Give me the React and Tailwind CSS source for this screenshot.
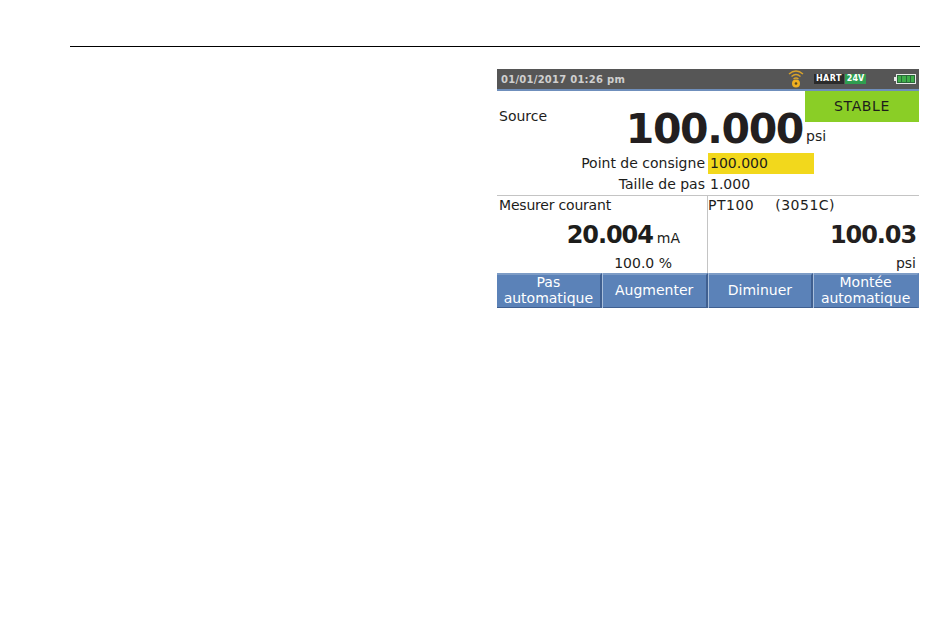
import React from "react";

const font = { fontFamily: '"DejaVu Sans", sans-serif' };

const WifiIcon = () => (
  <svg width="16" height="20" viewBox="0 0 16 20" fill="none" stroke="#d9a32a" strokeWidth="1.4">
    <path d="M1 5 Q8 -1 15 5" />
    <path d="M3.5 7.5 Q8 3.5 12.5 7.5" />
    <path d="M5.5 10 Q8 8 10.5 10" />
    <circle cx="8" cy="14.5" r="4" fill="#f0b020" stroke="none" />
    <circle cx="8" cy="14.5" r="1.3" fill="#5a4a20" stroke="none" />
  </svg>
);

const Battery = () => (
  <div className="flex items-center">
    <div className="h-[4px] w-[2px] bg-[#e8e8e8]" />
    <div className="flex h-[10px] w-[20px] gap-px border border-[#e8e8e8] bg-[#2a6a3a] p-px">
      <div className="flex-1 bg-[#3fae4a]" />
      <div className="flex-1 bg-[#3fae4a]" />
      <div className="flex-1 bg-[#3fae4a]" />
      <div className="flex-1 bg-[#3fae4a]" />
    </div>
  </div>
);

const SoftKey = ({ children }) => (
  <div className="flex flex-1 items-center justify-center border-t-2 border-r-2 border-b border-t-[#7d9cc6] border-r-[#3f5f90] border-b-[#3f5f90] bg-[#5b82b8] pb-[2px] text-center text-[14px] leading-[16px] text-white last:border-r-[#5b82b8]">
    <span>{children}</span>
  </div>
);

export default function App() {
  return (
    <div className="min-h-[644px] bg-white pt-[46px] text-[#1d1d1b]" style={font}>
      <div className="ml-[70px] mr-[30px] h-px bg-black" />
      <div className="ml-[497px] mt-[22px] w-[422px]">
        <div className="flex h-[20px] items-center bg-[#565656] pl-[4px] pr-[3px]">
          <span className="text-[10px] font-bold tracking-[0.25px] text-[#cfcfcf]">01/01/2017 01:26 pm</span>
          <div className="ml-auto flex items-center">
            <WifiIcon />
            <div className="ml-[10px] flex h-[10px] w-[30px] items-center justify-center bg-[#2b2b2b] text-[8px] font-bold tracking-[0.5px] text-white">HART</div>
            <div className="ml-[1px] flex h-[10px] w-[21px] items-center justify-center bg-[#2f9e50] text-[8px] font-bold text-white">24V</div>
            <div className="ml-[28px]"><Battery /></div>
          </div>
        </div>
        <div className="h-[2px] bg-[#6f8fbc]" />

        <div className="flex h-[62px]">
          <div className="flex w-[308px] justify-between">
            <span className="pl-[2px] pt-[17px] text-[14px] leading-[17px]">Source</span>
            <span className="pr-[2px] pt-[12px] text-[41px] font-bold leading-[52px] tracking-[-1.35px] text-[#231f20]">100.000</span>
          </div>
          <div className="flex-1">
            <div className="flex h-[31px] items-center justify-center bg-[#8ace26] text-[14px] tracking-[0.6px]">STABLE</div>
            <div className="pl-[1px] pt-[6px] text-[14px] leading-[17px]">psi</div>
          </div>
        </div>

        <div className="flex h-[21px] items-center text-[14px]">
          <div className="w-[208px] text-right">Point de consigne</div>
          <div className="ml-[3px] flex h-[21px] w-[106px] items-center bg-[#f2d81c] pl-[2px]">100.000</div>
        </div>
        <div className="flex h-[21px] items-center text-[14px]">
          <div className="w-[208px] text-right">Taille de pas</div>
          <div className="ml-[5px]">1.000</div>
        </div>

        <div className="flex h-[78px] border-t border-[#c4c4c4]">
          <div className="w-[211px] border-r border-[#c4c4c4] pl-[2px] pr-[27px]">
            <div className="text-[14px] leading-[19px] tracking-[-0.2px]">Mesurer courant</div>
            <div className="mt-[6px] flex items-baseline justify-end">
              <span className="text-[24px] font-bold leading-[28px] tracking-[-1.1px]">20.004</span>
              <span className="ml-[4px] text-[14px]">mA</span>
            </div>
            <div className="mt-[6px] pr-[8px] text-right text-[14px] leading-[17px]">100.0 %</div>
          </div>
          <div className="flex-1 pr-[3px]">
            <div className="flex text-[14px] leading-[19px] tracking-[0.5px]">
              <span>PT100</span>
              <span className="ml-[21px]">(3051C)</span>
            </div>
            <div className="mt-[6px] text-right text-[24px] font-bold leading-[28px] tracking-[-1.1px] text-[#231f20]">100.03</div>
            <div className="mt-[6px] text-right text-[14px] leading-[17px]">psi</div>
          </div>
        </div>

        <div className="flex h-[35px] gap-px bg-[#a9bfdc]">
          <SoftKey>Pas<br />automatique</SoftKey>
          <SoftKey>Augmenter</SoftKey>
          <SoftKey>Diminuer</SoftKey>
          <SoftKey>Montée<br />automatique</SoftKey>
        </div>
      </div>
    </div>
  );
}
